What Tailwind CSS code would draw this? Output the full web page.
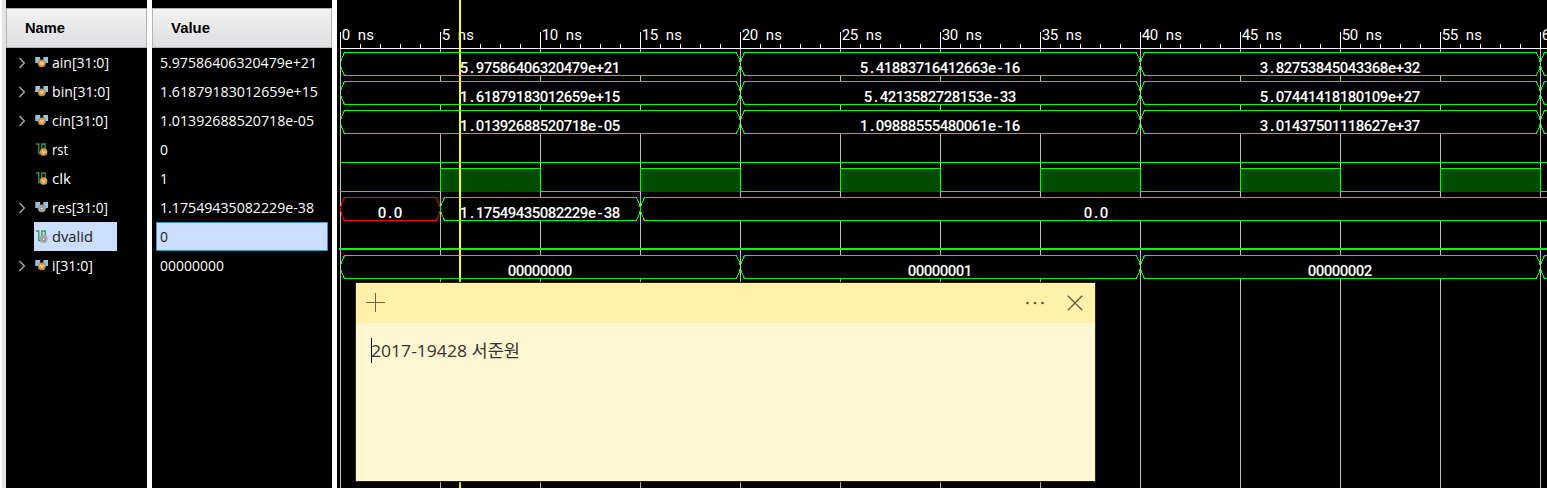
<!DOCTYPE html>
<html lang="en">
<head>
<meta charset="utf-8">
<title>Waveform viewer</title>
<script src="https://cdn.jsdelivr.net/npm/@tailwindcss/browser@4"></script>
</head>
<body class="bg-white overflow-hidden">
<svg class="hidden">
  <symbol id="bus" viewBox="0 0 14 12">
    <path d="M0.3 1H5.2V8L3.5 8.5L2.6 7H0.3ZM8.3 1H13V7H10.8L9.8 8.5L8.3 8Z" fill="#9cc3d8"/>
    <path d="M5 1L8.5 1L6.8 4Z" fill="#000"/>
    <circle cx="6.8" cy="7.4" r="3.7" fill="currentColor" stroke="#777" stroke-width=".6"/>
  </symbol>
  <symbol id="wire" viewBox="0 0 14 13">
    <path d="M1 1H3.8V10.5H6.8V1H10.2V8" fill="none" stroke="#36994b" stroke-width="1.3"/>
    <circle cx="8.6" cy="9" r="3.7" fill="currentColor" stroke="#777" stroke-width=".4"/>
  </symbol>
  <symbol id="v" viewBox="0 0 6 6"><path d="M1 1L3 5L5 1" fill="none" stroke="#fff" stroke-width="1.1"/></symbol>
  <symbol id="arrow" viewBox="0 0 8 12"><path d="M1.5 1L6.3 6L1.5 11" fill="none" stroke="#a2a2a2" stroke-width="1.5"/></symbol>
</svg>
<div class="flex h-[488px] w-[1547px] overflow-hidden font-['Open_Sans','Noto_Sans',sans-serif] text-[14px] text-white">
  <div class="w-[6px] shrink-0 border-l-2 border-white bg-[#e4e4e4]"></div>
  <section class="w-[141px] shrink-0 bg-black pt-2">
    <div class="flex h-[40px] items-center border border-[#b4b4b4] bg-linear-to-b from-[#f3f3f3] to-[#dedee1] pl-[18px] font-['Liberation_Sans',sans-serif] text-[15px] font-bold text-black"><span data-w="40" class="inline-block origin-left whitespace-nowrap">Name</span></div>
    <div id="names" class="flex flex-col"></div>
  </section>
  <div class="w-[5px] shrink-0 bg-white"></div>
  <section class="w-[180px] shrink-0 bg-black pt-2">
    <div class="flex h-[40px] items-center border border-[#b4b4b4] bg-linear-to-b from-[#f3f3f3] to-[#dedee1] pl-[18px] font-['Liberation_Sans',sans-serif] text-[15px] font-bold text-black"><span data-w="39" class="inline-block origin-left whitespace-nowrap">Value</span></div>
    <div id="values" class="flex flex-col"></div>
  </section>
  <div class="w-[5px] shrink-0 bg-white"></div>
  <section class="relative w-[1210px] shrink-0 bg-black">
    <svg id="wave" class="block h-[488px] w-[1210px] font-['Roboto',sans-serif]" viewBox="337 0 1210 488" shape-rendering="crispEdges"></svg>
    <div class="absolute left-[18px] top-[282px] flex h-[200px] w-[741px] flex-col border border-[#29271b] bg-[#fff6d2] text-[#333] shadow-[0_0_8px_rgba(0,0,0,0.4)]">
      <div class="flex h-[40px] items-center justify-between bg-[#fff1aa] pl-[9px] pr-3">
        <svg class="h-5 w-5" viewBox="0 0 20 20" shape-rendering="crispEdges"><path d="M1 9.5H20M10.5 0V19" stroke="#6b6546"/></svg>
        <div class="flex items-center gap-[23px]">
          <svg class="h-[18px] w-[18px]" viewBox="0 0 18 18" fill="#5f593e"><circle cx="1.5" cy="9" r="1.3"/><circle cx="9" cy="9" r="1.3"/><circle cx="16.5" cy="9" r="1.3"/></svg>
          <svg class="h-4 w-4" viewBox="0 0 16 16"><path d="M.8 .8L15.2 15.2M15.2 .8L.8 15.2" stroke="#5f593e" stroke-width="1.3"/></svg>
        </div>
      </div>
      <div class="flex items-center pl-[15px] pt-[15px]">
        <span class="h-[25px] w-px shrink-0 bg-black"></span>
        <span data-w="149" class="-ml-px inline-block origin-left whitespace-nowrap font-['Open_Sans','Noto_Sans_CJK_KR',sans-serif] text-[17px] leading-[25px]">2017-19428 서준원</span>
      </div>
    </div>
  </section>
</div>
<script>
const rows = [
  ['ain[31:0]', '5.97586406320479e+21', 'bus', '#ec9a36', 57, 157],
  ['bin[31:0]', '1.61879183012659e+15', 'bus', '#ec9a36', 58, 158],
  ['cin[31:0]', '1.01392688520718e-05', 'bus', '#ec9a36', 56, 154],
  ['rst', '0', 'wire', '#ec9a36', 16, 8],
  ['clk', '1', 'wire', '#ec9a36', 19, 8],
  ['res[31:0]', '1.17549435082229e-38', 'bus', '#b4b8bb', 56, 154],
  ['dvalid', '0', 'wire', '#b4b8bb', 41, 8],
  ['i[31:0]', '00000000', 'bus', '#ec9a36', 41, 64]
];
let names = '', values = '';
for (const [n, v, kind, color, nw, vw] of rows) {
  const sel = n === 'dvalid';
  const arrow = kind === 'bus' ? '<svg class="h-3 w-2"><use href="#arrow"/></svg>' : '';
  const mark = color === '#b4b8bb' ? (kind === 'bus' ? '<circle cx="6.8" cy="7.4" r="1.6" fill="#eee" stroke="#737373"/>' : '<circle cx="8.6" cy="9" r="1.6" fill="#eee" stroke="#737373"/>') :
    kind === 'bus' ? '<use href="#v" x="4.6" y="5" width="4.5" height="4.5"/>' : '<use href="#v" x="6.4" y="6.8" width="4.5" height="4.5"/>';
  names += `<div class="flex h-[29px] items-center"><div class="flex w-7 items-center pl-3">${arrow}</div>
    <div class="flex h-[29px] items-center ${sel ? 'w-[83px] bg-[#ccdeff] text-[#222]' : ''}">
    <svg class="ml-px mr-[3px] h-[13px] w-[14px]" viewBox="0 0 14 13" style="color:${color}"><use href="#${kind}" width="14" height="${kind === 'bus' ? 12 : 13}"/>${mark}</svg>
    <span class="inline-block origin-left whitespace-nowrap" data-w="${nw}">${n}</span></div></div>`;
  values += `<div class="flex h-[29px] items-center ${sel ? 'ml-1 mr-1 border border-[#3f8fc9] bg-[#ccdeff] pl-[3px] text-[#222]' : 'pl-2'}"><span class="inline-block origin-left whitespace-nowrap" data-w="${vw}">${v}</span></div>`;
}
document.getElementById('names').innerHTML = names;
document.getElementById('values').innerHTML = values;

const G = '#00ff00';
let s = '';
const line = (x1, y1, x2, y2, c, w = 1) => `<path d="M${x1} ${y1}L${x2} ${y2}" stroke="${c}" stroke-width="${w}"/>`;
const cells = (t, x, y, w) => `<text font-size="15" font-weight="${w}" fill="#fff" text-anchor="middle" y="${y}" x="${[...t].map((_, i) => x + 4 + i * 8).join(' ')}">${t}</text>`;
for (let k = 0; k <= 12; k++) {
  const x = 340.5 + 100 * k;
  s += line(x, 49, x, 488, '#c0c0c0');
}
const bus = (x1, x2, top, c = G) => {
  const a = x1 + .5, b = x2 + .5, t = top + .5, m = t + 11.5, e = t + 23;
  return `<path d="M${a} ${m}L${a + 1} ${m - 5}L${a + 4} ${t}H${b - 4}L${b - 1} ${m - 5}L${b} ${m}L${b - 1} ${m + 5}L${b - 4} ${e}H${a + 4}L${a + 1} ${m + 5}Z" fill="#000" stroke="${c}"/>`;
};
for (const top of [52, 81, 110, 255])
  for (const [a, b] of [[340, 740], [740, 1140], [1140, 1540], [1540, 1940]]) s += bus(a, b, top);
s += bus(340, 440, 197, '#ff0000') + bus(440, 640, 197) + bus(640, 1740, 197);
for (const x of [340, 740, 1140, 1540])
  for (const top of [52, 81, 110, 255]) s += line(x + .5, top + 8, x + .5, top + 16, '#a8cfa8');
s += line(340, 162.5, 1547, 162.5, G);
for (let x = 440; x < 1547; x += 200)
  s += `<path d="M${x} 168H${x + 100}V192H${x}Z" fill="#004d00"/>`;
let d = 'M340 191.5';
for (let x = 440; x < 1547; x += 200) d += `H${x + .5}V168.5H${x + 100.5}V191.5`;
s += `<path d="${d}H1547" fill="none" stroke="${G}"/>` + line(339, 249, 1547, 249, G, 2);
s += line(340, 48.5, 1547, 48.5, '#fff');
for (let k = 0; k <= 60; k++) {
  const x = 340.5 + 20 * k;
  s += line(x, k % 5 ? 44 : 32, x, 49, '#fff');
}
for (let k = 0; k < 12; k++) s += cells(`${k * 5} ns`, 342 + 100 * k, 40, 400);
s += cells('6', 1542, 40, 400);
const labels = [
  [73, '5.97586406320479e+21', 460, '5.41883716412663e-16', 860, '3.82753845043368e+32', 1260],
  [102, '1.61879183012659e+15', 460, '5.4213582728153e-33', 864, '5.07441418180109e+27', 1260],
  [131, '1.01392688520718e-05', 460, '1.09888555480061e-16', 860, '3.01437501118627e+37', 1260],
  [218, '0.0', 378, '1.17549435082229e-38', 460, '0.0', 1084],
  [276, '00000000', 508, '00000001', 908, '00000002', 1308]
];
for (const [y, ...r] of labels) for (let i = 0; i < r.length; i += 2) s += cells(r[i], r[i + 1], y, 500);
s += line(460, 0, 460, 488, '#ffff00', 2);
document.getElementById('wave').innerHTML = s;

const fit = () => {
  for (const el of document.querySelectorAll('[data-w]')) {
    el.style.transform = 'none';
    el.style.transform = `scaleX(${el.dataset.w / el.getBoundingClientRect().width})`;
  }
};
fit();
addEventListener('load', fit);
document.fonts.ready.then(fit);
</script>
</body>
</html>
